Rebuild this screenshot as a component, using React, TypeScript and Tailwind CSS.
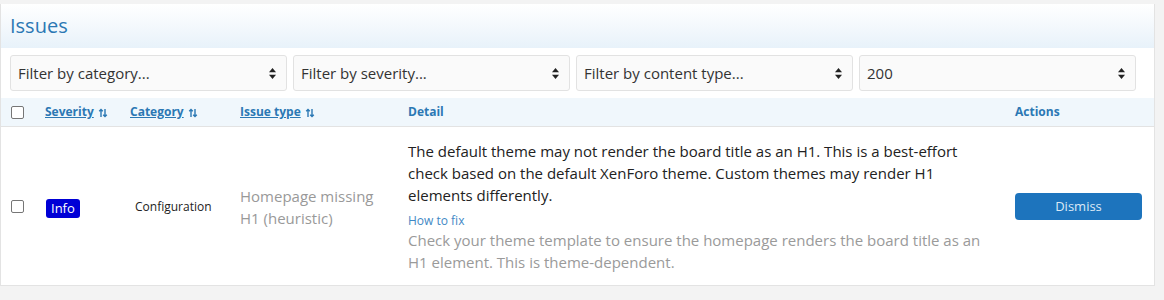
import React from "react";

const filters = ["Filter by category...", "Filter by severity...", "Filter by content type...", "200"];

function SortIcon() {
  return (
    <svg width="10" height="10" viewBox="0 0 10 10" className="ml-[4px] inline-block" fill="none" stroke="currentColor" strokeWidth="1.4">
      <path d="M3 9V1.5M1.2 3.3 3 1.5l1.8 1.8" />
      <path d="M7 1v7.5M5.2 6.7 7 8.5l1.8-1.8" />
    </svg>
  );
}

function Select({ label }: { label: string }) {
  return (
    <div className="flex h-[36px] items-center justify-between rounded-[3px] border border-[#e2e2e2] bg-[#fafafa] pl-[7px] pr-[10px] text-[15px] text-[#333]">
      <span>{label}</span>
      <svg width="7" height="11" viewBox="0 0 7 11" fill="#222">
        <path d="M3.5 0 7 4.2H0z" />
        <path d="M0 6.8h7L3.5 11z" />
      </svg>
    </div>
  );
}

function Checkbox() {
  return <span className="inline-block h-[13px] w-[13px] rounded-[2px] border border-[#767676] bg-white" />;
}

export default function App() {
  return (
    <div className="h-[300px] w-[1164px] bg-[#f3f3f3] pt-[4px] pr-[9px]" style={{ fontFamily: '"Open Sans", "Noto Sans", sans-serif' }}>
      <div className="w-[1155px] border border-[#e3e3e3] border-t-0 bg-white">
        <div className="h-[44px] bg-gradient-to-b from-white to-[#e8f2fa] pl-[9px] pt-[10px] text-[20px] leading-[24px] text-[#2b78b4]">
          Issues
        </div>
        <div className="grid grid-cols-4 gap-[6px] py-[7px] pl-[9px] pr-[18px]">
          {filters.map((f) => (
            <Select key={f} label={f} />
          ))}
        </div>
        <div className="grid h-[29px] grid-cols-[34px_86px_110px_168px_607px_1fr] items-center border-b border-[#e3e3e3] bg-[#f0f7fc] text-[12px] font-bold text-[#2b78b4]">
          <div className="flex pl-[10px]"><Checkbox /></div>
          <div className="pl-[10px] underline">Severity<SortIcon /></div>
          <div className="pl-[9px] underline">Category<SortIcon /></div>
          <div className="pl-[9px] underline">Issue type<SortIcon /></div>
          <div className="pl-[9px]">Detail</div>
          <div className="pl-[9px]">Actions</div>
        </div>
        <div className="grid grid-cols-[34px_86px_110px_168px_607px_1fr] items-center pt-[13px] pb-[12px]">
          <div className="flex pl-[10px]"><Checkbox /></div>
          <div className="pl-[11px]">
            <span className="inline-block rounded-[3px] bg-[#0000d6] px-[5px] text-[13px] leading-[19px] text-white">Info</span>
          </div>
          <div className="pl-[14px] text-[12px] text-[#222]">Configuration</div>
          <div className="pl-[9px] pr-[24px] text-[15px] leading-[22px] text-[#999]">Homepage missing H1 (heuristic)</div>
          <div className="pl-[9px] pr-[16px]">
            <div className="text-[15px] leading-[22px] text-[#222]">
              The default theme may not render the board title as an H1. This is a best-effort check based on the default XenForo theme. Custom themes may render H1 elements differently.
            </div>
            <div className="mt-[7px] text-[12px] leading-[16px] text-[#3f88c5]">How to fix</div>
            <div className="text-[15px] leading-[22px] text-[#9a9a9a]">
              Check your theme template to ensure the homepage renders the board title as an H1 element. This is theme-dependent.
            </div>
          </div>
          <div className="pl-[9px] pr-[12px]">
            <button className="h-[27px] w-full rounded-[4px] bg-[#1d74bd] text-[13px] text-[#dbe9f6]">Dismiss</button>
          </div>
        </div>
      </div>
    </div>
  );
}
